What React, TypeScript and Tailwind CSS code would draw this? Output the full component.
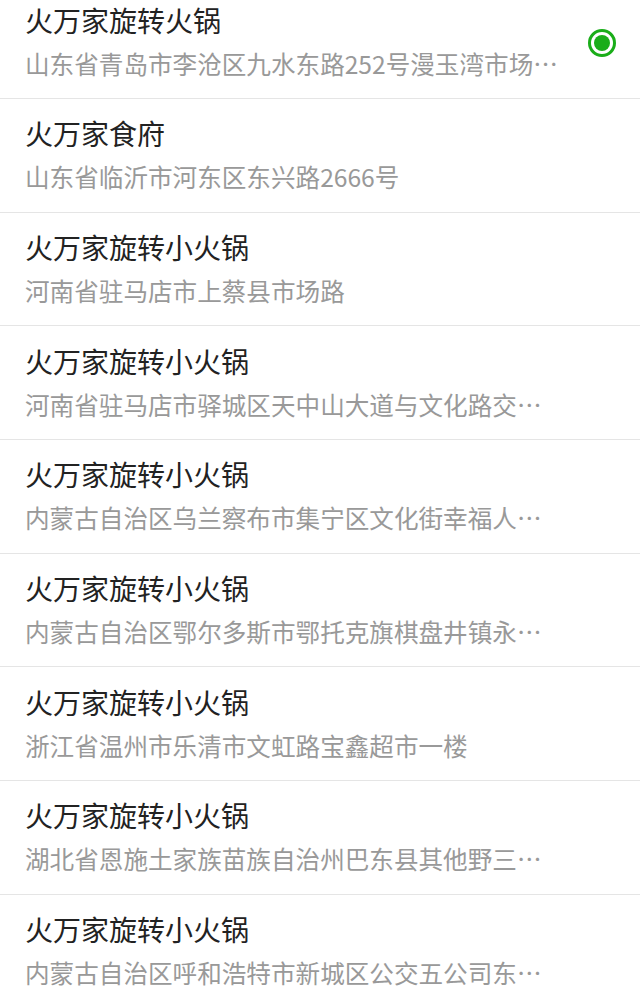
const stores = [
  { name: '火万家旋转火锅', address: '山东省青岛市李沧区九水东路252号漫玉湾市场⋯', selected: true },
  { name: '火万家食府', address: '山东省临沂市河东区东兴路2666号' },
  { name: '火万家旋转小火锅', address: '河南省驻马店市上蔡县市场路' },
  { name: '火万家旋转小火锅', address: '河南省驻马店市驿城区天中山大道与文化路交⋯' },
  { name: '火万家旋转小火锅', address: '内蒙古自治区乌兰察布市集宁区文化街幸福人⋯' },
  { name: '火万家旋转小火锅', address: '内蒙古自治区鄂尔多斯市鄂托克旗棋盘井镇永⋯' },
  { name: '火万家旋转小火锅', address: '浙江省温州市乐清市文虹路宝鑫超市一楼' },
  { name: '火万家旋转小火锅', address: '湖北省恩施土家族苗族自治州巴东县其他野三⋯' },
  { name: '火万家旋转小火锅', address: '内蒙古自治区呼和浩特市新城区公交五公司东⋯' },
];

export default function App() {
  return (
    <div
      className="h-[997px] w-[640px] overflow-hidden bg-white"
      style={{ fontFamily: '"Noto Sans CJK SC", "Noto Sans", sans-serif' }}
    >
      <div className="-mt-[14.7px]">
        {stores.map((store, i) => (
          <div
            key={i}
            className="flex h-[113.7px] items-center border-b border-[#e5e5e5] pl-[25px] pr-[24px]"
          >
            <div className="min-w-0 flex-1">
              <div className="whitespace-nowrap text-[28px] leading-[40px] text-[#222]">
                {store.name}
              </div>
              <div className="mt-[2px] whitespace-nowrap text-[24.6px] leading-[42px] text-[#999]">
                {store.address}
              </div>
            </div>
            <div className="flex w-[40px] shrink-0 justify-end self-start pt-[44px]">
              {store.selected && (
                <div className="flex h-[28px] w-[28px] items-center justify-center rounded-full border-[3px] border-[#1aad19]">
                  <div className="h-[16px] w-[16px] rounded-full bg-[#1aad19]" />
                </div>
              )}
            </div>
          </div>
        ))}
      </div>
    </div>
  );
}
